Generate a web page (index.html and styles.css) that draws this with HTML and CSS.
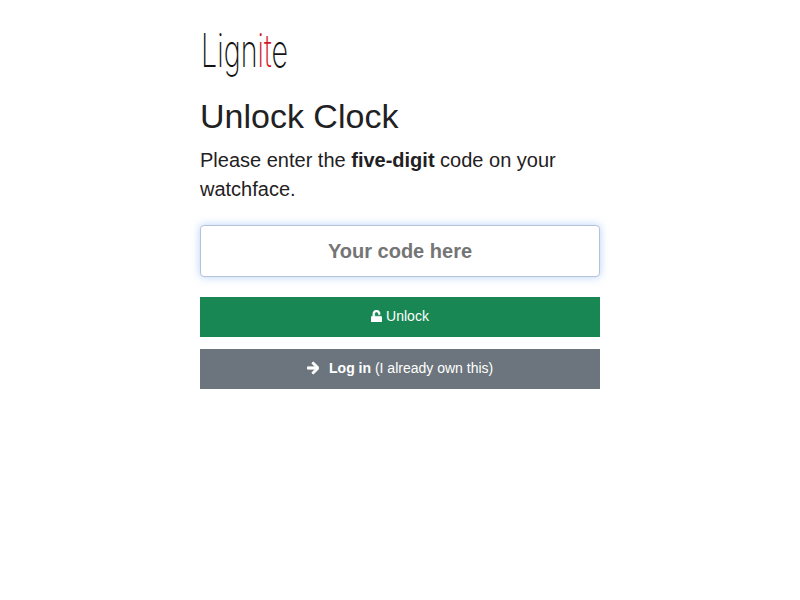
FILE: index.html
```html
<!DOCTYPE html>
<html lang="en">
<head>
    <meta charset="UTF-8">
    <title>Unlock Clock</title>
    <link rel="stylesheet" href="styles.css">
</head>
<body>
    <main class="container">
        <!-- logo -->
        <svg class="logo" width="92" height="56" viewBox="0 0 92 56" role="img" aria-label="Lignite">
            <text x="1" y="39" textLength="87" lengthAdjust="spacingAndGlyphs">Lign<tspan class="logo-red">it</tspan>e</text>
        </svg>

        <h1 class="title">Unlock Clock</h1>
        <p class="lead">Please enter the <strong>five-digit</strong> code on your watchface.</p>

        <input class="code-input" type="text" placeholder="Your code here">

        <a class="btn btn-green" href="#">
            <svg width="11" height="12.500" viewBox="0 0 448 512">
                <path fill="#fff" stroke="#fff" stroke-width="16" d="M400 256H152V152.900c0-39.600 31.700-72.500 71.300-72.900 40-.4 72.700 32.100 72.700 72v16c0 13.300 10.700 24 24 24h32c13.300 0 24-10.700 24-24v-16C376 68 307.500-.3 223.500 0 139.500.3 72 69.500 72 153.500V256H48c-26.500 0-48 21.500-48 48v160c0 26.500 21.500 48 48 48h352c26.500 0 48-21.500 48-48V304c0-26.500-21.500-48-48-48z"/>
            </svg>
            Unlock
        </a>
        <a class="btn btn-grey" href="#">
            <svg width="12.250" height="14" viewBox="0 0 448 512">
                <path fill="#fff" stroke="#fff" stroke-width="36" d="M190.500 66.900l22.200-22.200c9.400-9.400 24.600-9.400 33.900 0L441 239c9.400 9.400 9.400 24.600 0 33.900L246.600 467.300c-9.400 9.400-24.600 9.400-33.900 0l-22.200-22.200c-9.500-9.500-9.300-25 .4-34.300L311.400 296H24c-13.300 0-24-10.700-24-24v-32c0-13.300 10.700-24 24-24h287.400L190.900 101.200c-9.800-9.300-10-24.800-.4-34.300z"/>
            </svg>
            <span><strong>Log in</strong> (I already own this)</span>
        </a>
    </main>
</body>
</html>
```

FILE: styles.css
```css
* {
    margin: 0;
    padding: 0;
    box-sizing: border-box;
}

body {
    font-family: "Liberation Sans", Arial, sans-serif;
    color: #1f2123;
    background: #fff;
}

.container {
    width: 400px;
    margin: 0 auto;
    padding-top: 28px;
    display: flex;
    flex-direction: column;
}

/* logo */
.logo {
    display: block;
    margin-bottom: 12px;
    opacity: 0.99;
}

.logo text {
    font-family: "Inter", sans-serif;
    font-weight: 200;
    font-size: 46px;
    fill: #111;
}

.logo .logo-red {
    fill: #d4141c;
}

.title {
    font-size: 34px;
    font-weight: 400;
    line-height: 41px;
    margin-bottom: 9px;
}

.lead {
    font-size: 20px;
    line-height: 29px;
    margin-bottom: 21px;
}

.code-input {
    display: block;
    width: 100%;
    height: 52px;
    font-family: inherit;
    font-size: 20px;
    font-weight: 700;
    text-align: center;
    color: #495057;
    border: 1px solid #b4c2da;
    border-radius: 4px;
    box-shadow: 0 0 8px rgba(110, 165, 240, 0.5);
    outline: none;
    margin-bottom: 20px;
}

.code-input::placeholder {
    color: #757575;
    opacity: 1;
}

.btn {
    height: 40px;
    padding-bottom: 2px;
    display: flex;
    align-items: center;
    justify-content: center;
    color: #fff;
    font-size: 14px;
    text-decoration: none;
}

.btn-green {
    background: #198754;
    gap: 4px;
    margin-bottom: 12px;
}

.btn-grey {
    background: #6c757d;
    gap: 10px;
}
```
